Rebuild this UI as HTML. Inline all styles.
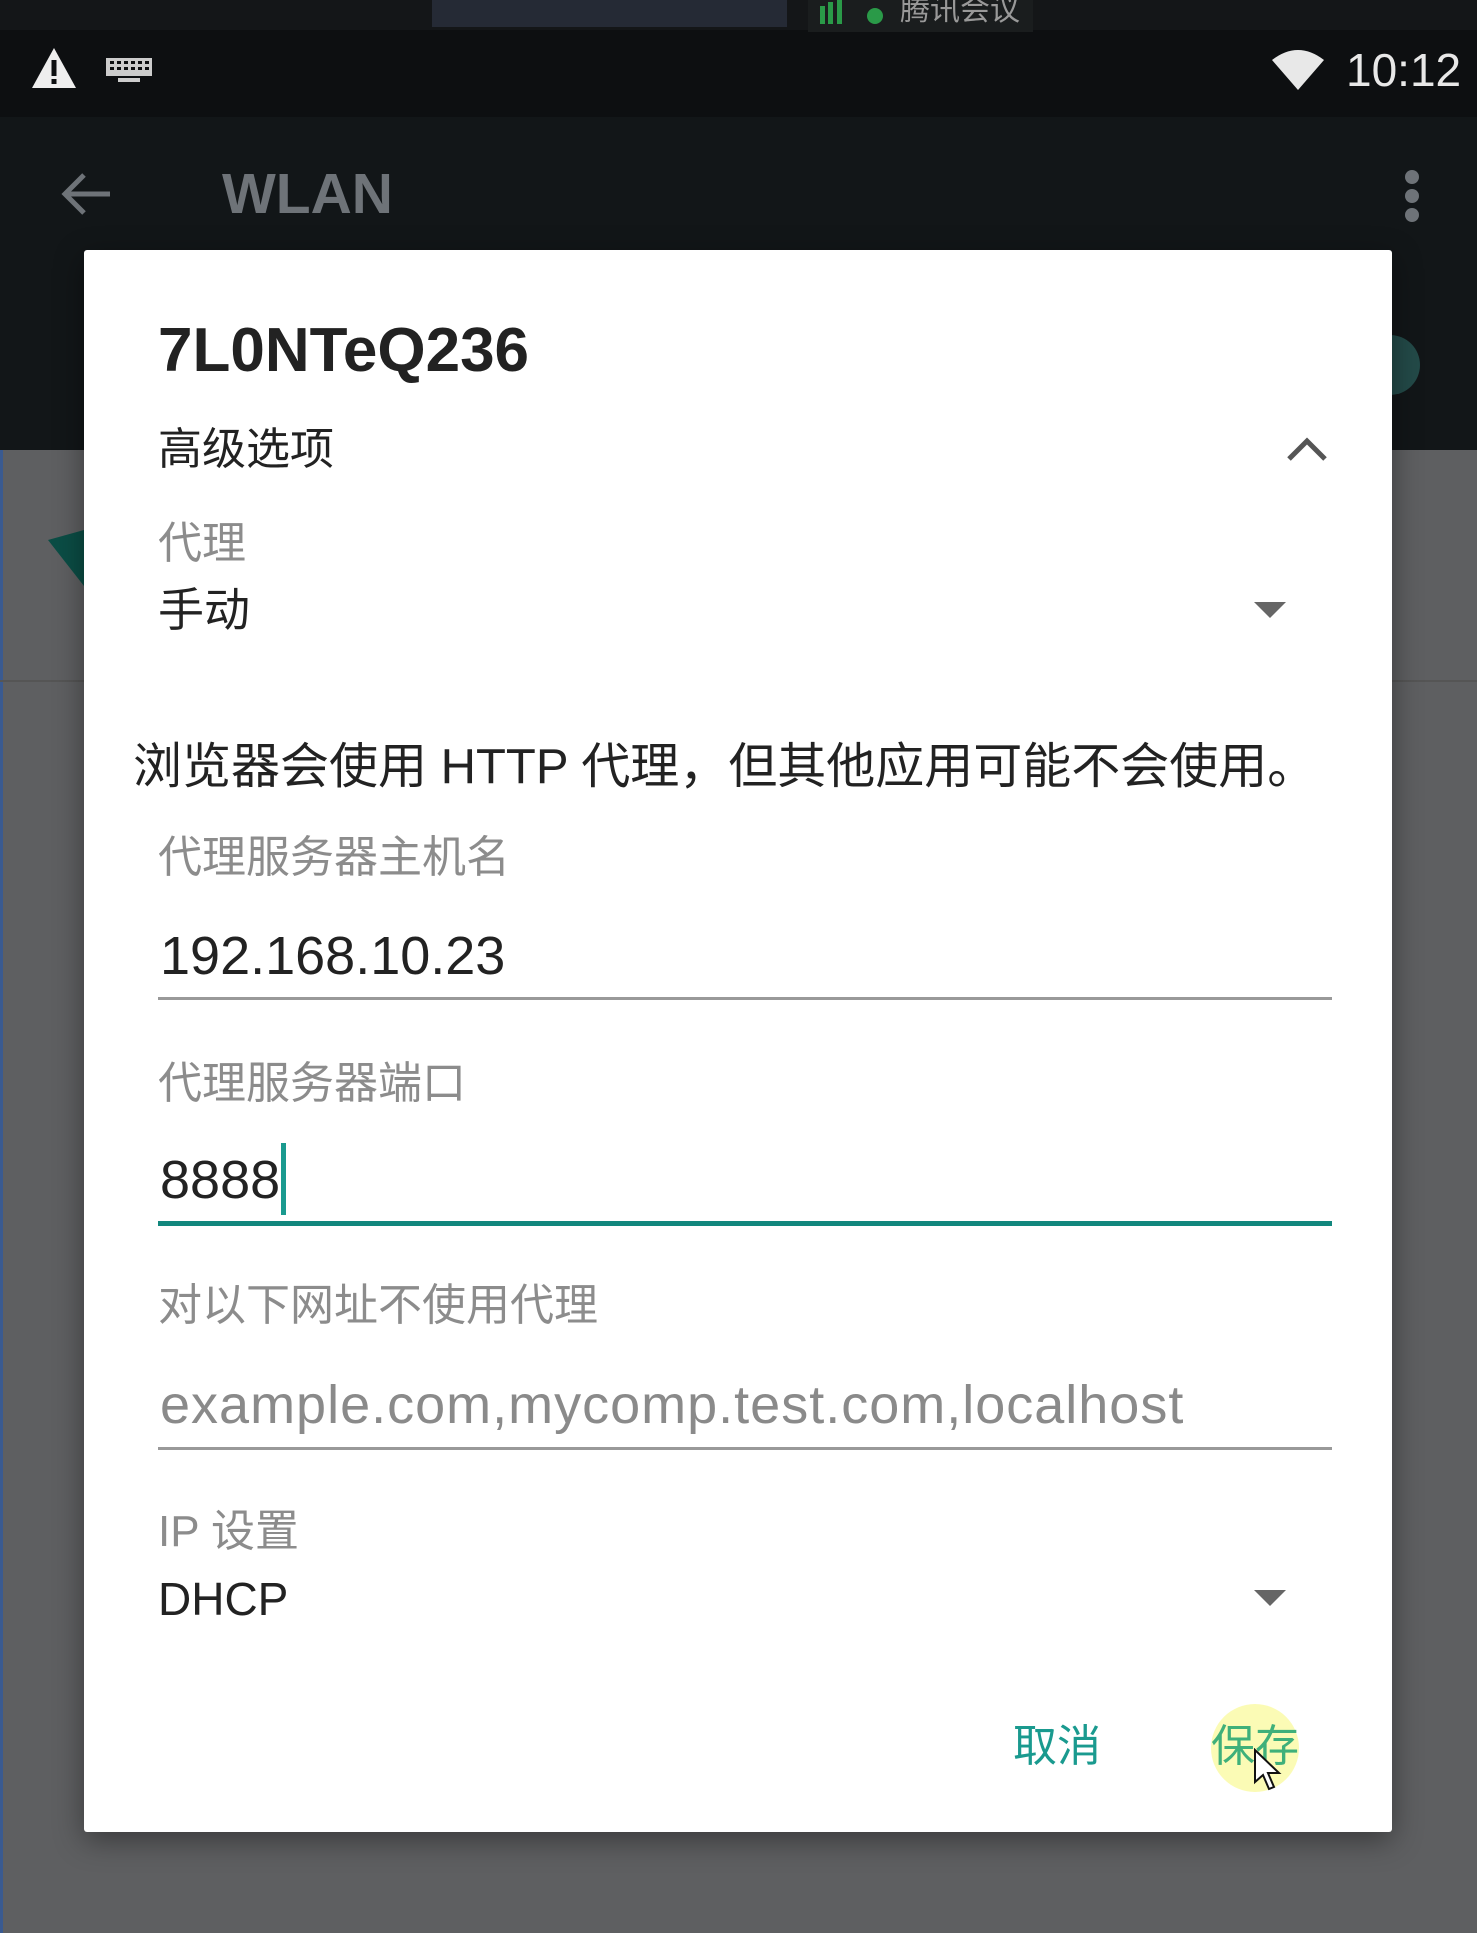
<!DOCTYPE html>
<html><head><meta charset="utf-8"><style>
body{margin:0;width:1477px;height:1933px;position:relative;overflow:hidden;background:#5e5f61;font-family:"Liberation Sans","Noto Sans CJK SC",sans-serif;}
.a{position:absolute;white-space:nowrap;line-height:1;}
.g{color:#8c8c8c;font-size:44px;}
.d{color:#222;font-size:46px;}
</style></head><body>
<div class="a" style="left:0;top:0;width:1477px;height:450px;background:#121618"></div>
<div class="a" style="left:0;top:0;width:1477px;height:117px;background:#0d0f11"></div>
<div class="a" style="left:0;top:0;width:1477px;height:30px;background:#141618"></div>
<div class="a" style="left:432px;top:0;width:355px;height:27px;background:#252a35"></div>
<div class="a" style="left:808px;top:0;width:225px;height:32px;background:#1a1d1e"></div>
<div class="a" style="left:820px;top:6px;width:5px;height:18px;background:#2a9a48"></div>
<div class="a" style="left:828px;top:2px;width:5px;height:22px;background:#2a9a48"></div>
<div class="a" style="left:837px;top:-2px;width:5px;height:26px;background:#2a9a48"></div>
<div class="a" style="left:867px;top:8px;width:16px;height:16px;border-radius:50%;background:#2a9a48"></div>
<div class="a" style="left:900px;top:-4px;font-size:30px;color:#999">腾讯会议</div>
<div class="a" style="left:0;top:450px;width:3px;height:1483px;background:#3a5a90"></div>
<div class="a" style="left:0;top:680px;width:1477px;height:2px;background:#555"></div>
<svg class="a" style="left:48px;top:530px" width="40" height="60"><path d="M0 10 L36 0 L36 56 Z" fill="#0b4d45"/></svg>
<div class="a" style="left:1360px;top:335px;width:60px;height:60px;border-radius:50%;background:#234a48"></div>
<!-- status -->
<svg class="a" style="left:30px;top:46px" width="48" height="44"><path d="M24 2 L46 42 H2 Z" fill="#eee"/><rect x="21.5" y="14" width="5" height="16" fill="#0d0f11"/><rect x="21.5" y="33" width="5" height="5" fill="#0d0f11"/></svg>
<svg class="a" style="left:106px;top:58px" width="46" height="24"><rect x="0" y="0" width="46" height="18" fill="#ccc"/><g fill="#0d0f11"><rect x="4" y="3" width="4" height="3"/><rect x="11" y="3" width="4" height="3"/><rect x="18" y="3" width="4" height="3"/><rect x="25" y="3" width="4" height="3"/><rect x="32" y="3" width="4" height="3"/><rect x="39" y="3" width="4" height="3"/><rect x="4" y="9" width="4" height="3"/><rect x="11" y="9" width="4" height="3"/><rect x="18" y="9" width="4" height="3"/><rect x="25" y="9" width="4" height="3"/><rect x="32" y="9" width="4" height="3"/><rect x="39" y="9" width="4" height="3"/></g><rect x="12" y="20" width="22" height="4" fill="#ccc"/></svg>
<svg class="a" style="left:1270px;top:46px" width="56" height="46"><path d="M2 14 Q28 -6 54 14 L28 44 Z" fill="#e8e8e8"/></svg>
<div class="a" style="left:1346px;top:47px;font-size:46px;color:#e8e8e8">10:12</div>
<!-- app bar -->
<svg class="a" style="left:60px;top:170px" width="52" height="48"><path d="M50 24 H6 M24 5 L5 24 L24 43" stroke="#6e7378" stroke-width="5" fill="none"/></svg>
<div class="a" style="left:222px;top:166px;font-size:57px;color:#6e7378;font-weight:bold">WLAN</div>
<div class="a" style="left:1405px;top:170px;width:14px;height:14px;border-radius:50%;background:#6e7378"></div>
<div class="a" style="left:1405px;top:189px;width:14px;height:14px;border-radius:50%;background:#6e7378"></div>
<div class="a" style="left:1405px;top:208px;width:14px;height:14px;border-radius:50%;background:#6e7378"></div>
<!-- dialog -->
<div class="a" style="left:84px;top:250px;width:1308px;height:1582px;background:#fff;border-radius:3px;box-shadow:0 8px 30px rgba(0,0,0,.4)"></div>
<div class="a" style="left:158px;top:320px;font-size:62px;color:#222;font-weight:bold">7L0NTeQ236</div>
<div class="a d" style="left:158px;top:428px;font-size:44px">高级选项</div>
<svg class="a" style="left:1286px;top:436px" width="42" height="26"><path d="M3 23 L21 5 L39 23" stroke="#555" stroke-width="5" fill="none"/></svg>
<div class="a g" style="left:158px;top:522px">代理</div>
<div class="a d" style="left:158px;top:587px">手动</div>
<svg class="a" style="left:1254px;top:602px" width="32" height="16"><path d="M0 0 H32 L16 16 Z" fill="#666"/></svg>
<div class="a" style="left:133px;top:743px;font-size:49px;color:#222">浏览器会使用 HTTP 代理，但其他应用可能不会使用。</div>
<div class="a g" style="left:158px;top:836px">代理服务器主机名</div>
<div class="a" style="left:160px;top:929px;font-size:54px;color:#222">192.168.10.23</div>
<div class="a" style="left:158px;top:997px;width:1174px;height:3px;background:#999"></div>
<div class="a g" style="left:158px;top:1062px">代理服务器端口</div>
<div class="a" style="left:160px;top:1153px;font-size:54px;color:#222">8888</div>
<div class="a" style="left:281px;top:1143px;width:5px;height:72px;background:#1a9a8f"></div>
<div class="a" style="left:158px;top:1221px;width:1174px;height:5px;background:#12877d"></div>
<div class="a g" style="left:158px;top:1284px">对以下网址不使用代理</div>
<div class="a" style="left:160px;top:1378px;font-size:54px;color:#8a8a8a;letter-spacing:1px">example.com,mycomp.test.com,localhost</div>
<div class="a" style="left:158px;top:1447px;width:1174px;height:3px;background:#999"></div>
<div class="a g" style="left:158px;top:1510px">IP 设置</div>
<div class="a d" style="left:158px;top:1576px">DHCP</div>
<svg class="a" style="left:1254px;top:1590px" width="32" height="16"><path d="M0 0 H32 L16 16 Z" fill="#666"/></svg>
<div class="a" style="left:1013px;top:1725px;font-size:44px;color:#1a9a8f">取消</div>
<div class="a" style="left:1211px;top:1704px;width:88px;height:88px;border-radius:50%;background:rgba(250,250,150,.7)"></div>
<div class="a" style="left:1211px;top:1725px;font-size:44px;color:#3fb07a">保存</div>
<svg class="a" style="left:1253px;top:1748px" width="30" height="46"><path d="M2 2 L2 34 L10 27 L16 41 L21 39 L15 25 L26 25 Z" fill="#fff" stroke="#111" stroke-width="2"/></svg>
</body></html>
